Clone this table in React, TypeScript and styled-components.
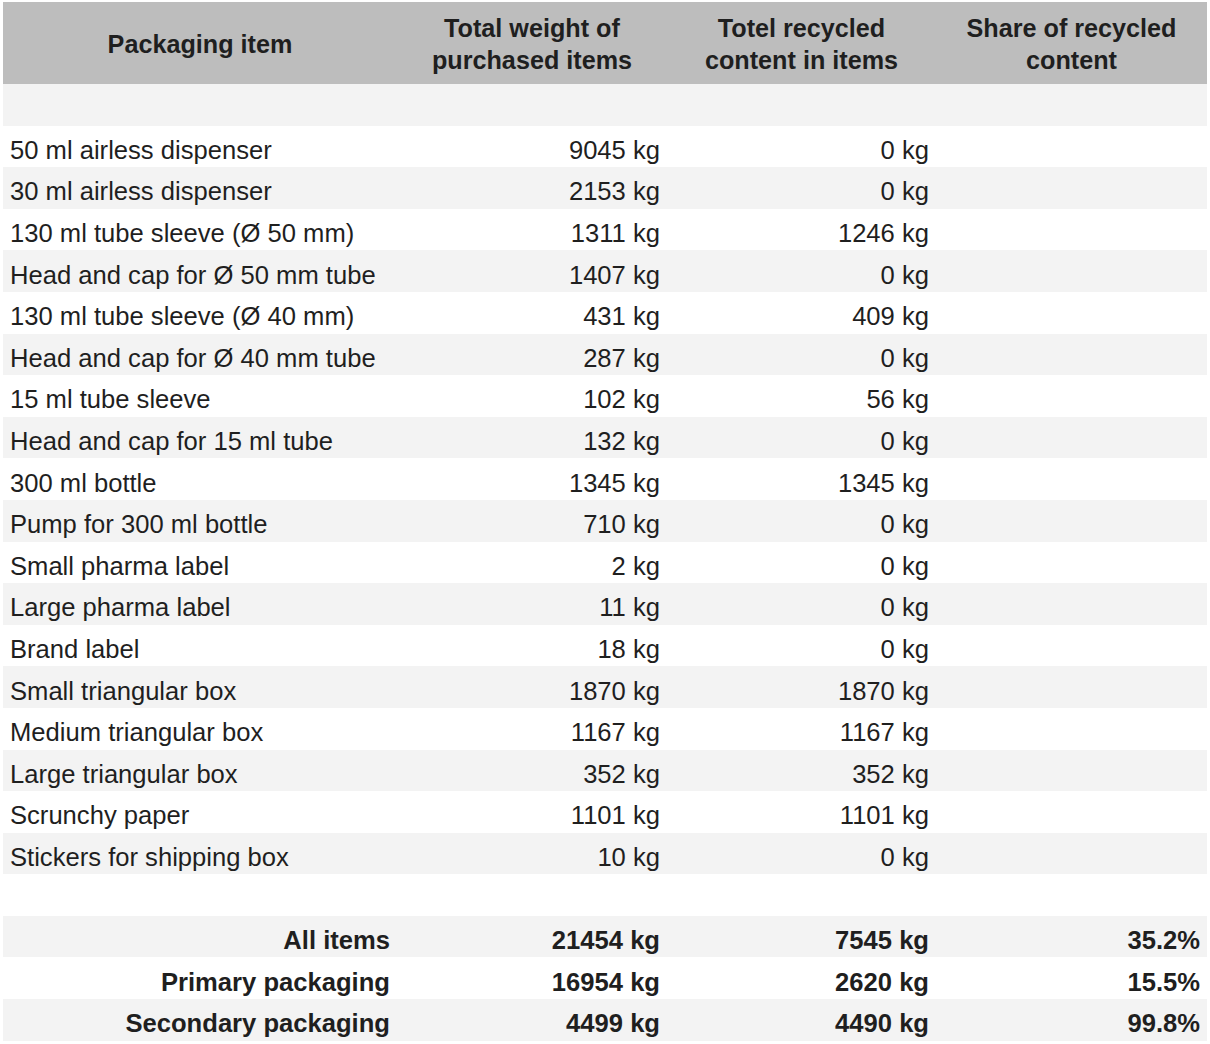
import React from "react";
import styled, { createGlobalStyle } from "styled-components";

const Global = createGlobalStyle`
  html, body { margin: 0; padding: 0; background: #ffffff; }
  body { font-family: "Liberation Sans", Arial, Helvetica, sans-serif; }
`;

const Page = styled.div`
  padding: 2px 3px 0 3px;
`;

const Table = styled.table`
  width: 1204px;
  border-collapse: collapse;
  table-layout: fixed;
  color: #1f1f1f;
  font-size: 25.6px;
`;

const HeadCell = styled.th`
  background: #bdbdbd;
  height: 82px;
  padding: 2px 6px 0 6px;
  font-size: 25.2px;
  font-weight: 700;
  text-align: center;
  line-height: 32px;
  vertical-align: middle;
  box-sizing: border-box;
`;

const Row = styled.tr<{ $shade: boolean }>`
  height: 41.6px;
  background: ${(p) => (p.$shade ? "#f3f3f3" : "#ffffff")};
`;

const Cell = styled.td<{ $align?: "left" | "right"; $bold?: boolean }>`
  padding: 7px 7px 0 7px;
  height: 41.6px;
  line-height: 28px;
  white-space: nowrap;
  text-align: ${(p) => p.$align ?? "right"};
  font-weight: ${(p) => (p.$bold ? 700 : 400)};
  vertical-align: middle;
  box-sizing: border-box;
`;

const items: [string, number, number][] = [
  ["50 ml airless dispenser", 9045, 0],
  ["30 ml airless dispenser", 2153, 0],
  ["130 ml tube sleeve (Ø 50 mm)", 1311, 1246],
  ["Head and cap for Ø 50 mm tube", 1407, 0],
  ["130 ml tube sleeve (Ø 40 mm)", 431, 409],
  ["Head and cap for Ø 40 mm tube", 287, 0],
  ["15 ml tube sleeve", 102, 56],
  ["Head and cap for 15 ml tube", 132, 0],
  ["300 ml bottle", 1345, 1345],
  ["Pump for 300 ml bottle", 710, 0],
  ["Small pharma label", 2, 0],
  ["Large pharma label", 11, 0],
  ["Brand label", 18, 0],
  ["Small triangular box", 1870, 1870],
  ["Medium triangular box", 1167, 1167],
  ["Large triangular box", 352, 352],
  ["Scrunchy paper", 1101, 1101],
  ["Stickers for shipping box", 10, 0],
];

const totals: [string, number, number, string][] = [
  ["All items", 21454, 7545, "35.2%"],
  ["Primary packaging", 16954, 2620, "15.5%"],
  ["Secondary packaging", 4499, 4490, "99.8%"],
];

export default function App() {
  let idx = 0;
  const next = () => idx++ % 2 === 0;
  return (
    <Page>
      <Global />
      <Table>
        <colgroup>
          <col style={{ width: 394 }} />
          <col style={{ width: 270 }} />
          <col style={{ width: 269 }} />
          <col style={{ width: 271 }} />
        </colgroup>
        <thead>
          <tr>
            <HeadCell>Packaging item</HeadCell>
            <HeadCell>
              Total weight of
              <br />
              purchased items
            </HeadCell>
            <HeadCell>
              Totel recycled
              <br />
              content in items
            </HeadCell>
            <HeadCell>
              Share of recycled
              <br />
              content
            </HeadCell>
          </tr>
        </thead>
        <tbody>
          <Row $shade={next()}>
            <Cell />
            <Cell />
            <Cell />
            <Cell />
          </Row>
          {items.map(([name, w, r]) => (
            <Row key={name} $shade={next()}>
              <Cell $align="left">{name}</Cell>
              <Cell>{w} kg</Cell>
              <Cell>{r} kg</Cell>
              <Cell />
            </Row>
          ))}
          <Row $shade={next()}>
            <Cell />
            <Cell />
            <Cell />
            <Cell />
          </Row>
          {totals.map(([name, w, r, s]) => (
            <Row key={name} $shade={next()}>
              <Cell $bold>{name}</Cell>
              <Cell $bold>{w} kg</Cell>
              <Cell $bold>{r} kg</Cell>
              <Cell $bold>{s}</Cell>
            </Row>
          ))}
        </tbody>
      </Table>
    </Page>
  );
}
